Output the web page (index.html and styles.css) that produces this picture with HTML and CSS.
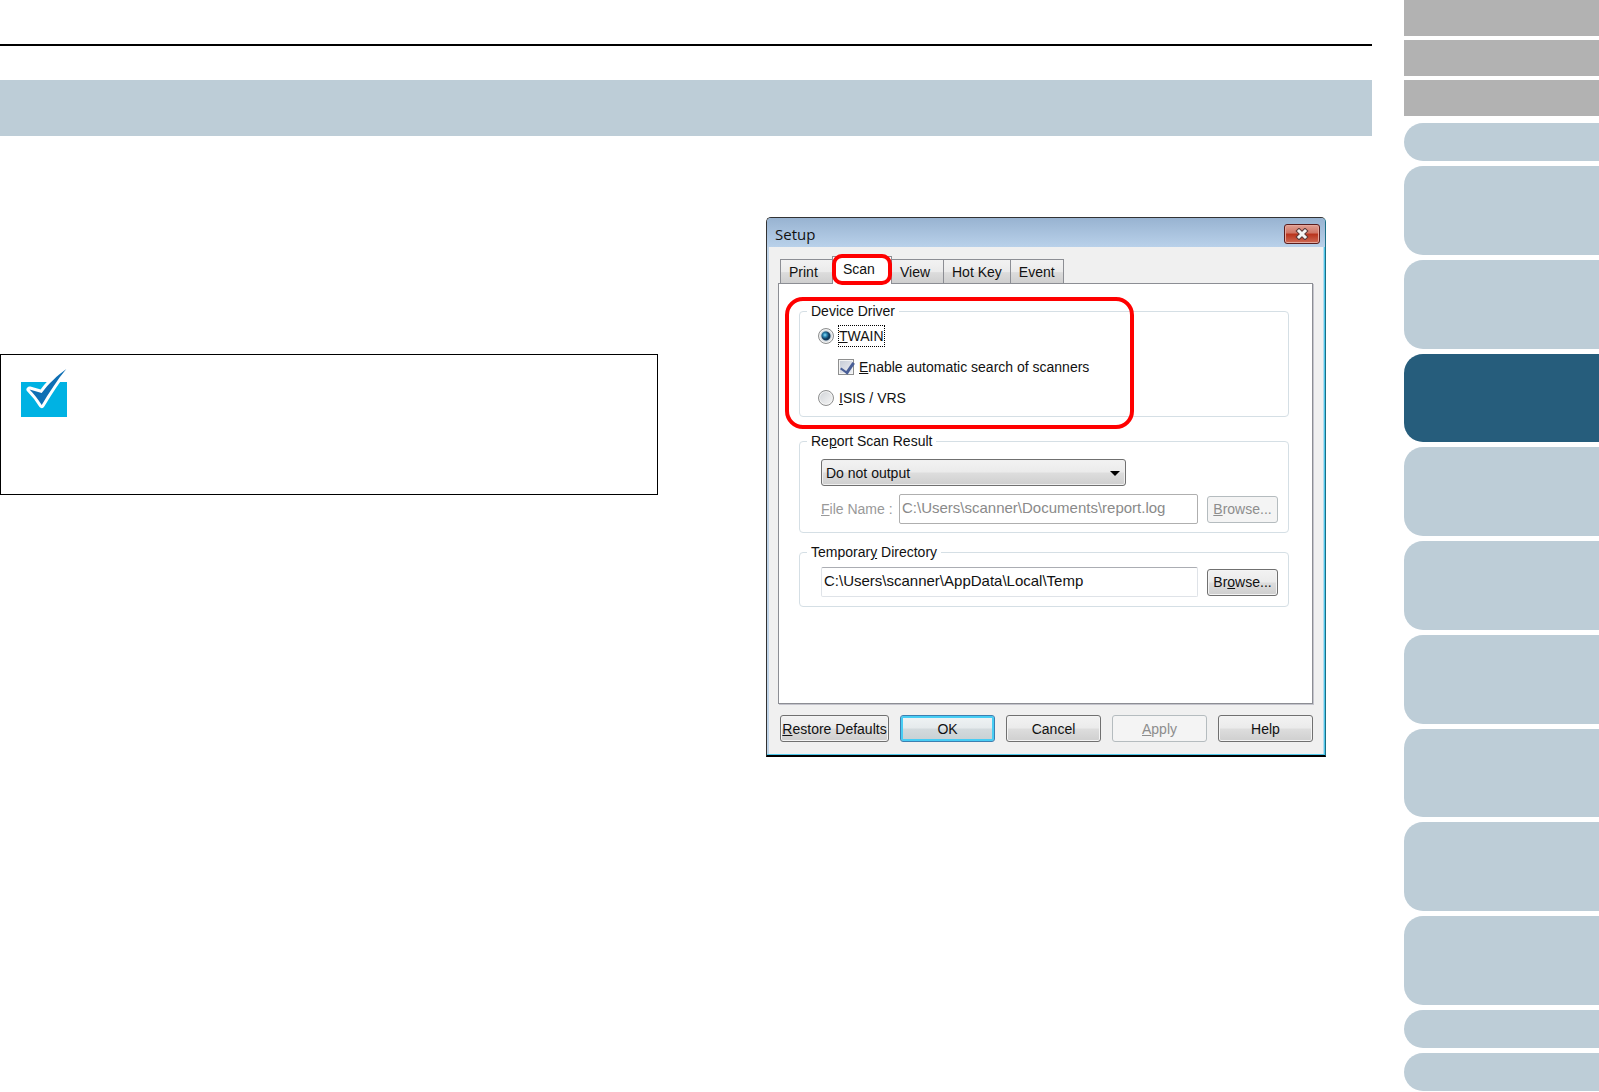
FILE: index.html
```html
<!DOCTYPE html>
<html lang="en">
  <head>
    <meta charset="UTF-8" />
    <title>Scan Setup</title>
    <link rel="stylesheet" href="styles.css">
  </head>
  <body>
    <div class="page">
      <main class="content">
        <div class="rule"></div>
        <div class="heading-bar"></div>

        <div class="columns">
          <div class="column">
            <div class="note">
              <svg class="note-icon" viewBox="0 0 46 51" width="46" height="51" aria-hidden="true">
                <rect x="0" y="16" width="46" height="35" fill="#00b2e3" />
                <path d="M8.5 23.5 L20.7 27 C27 18 37 9 45.3 3 C36 14 28 27 20.7 39 C17 33 13 28 8.5 23.5 Z" fill="#fff" stroke="#fff" stroke-width="6" stroke-linejoin="round" />
                <path d="M8.5 23.5 L20.7 27 C27 18 37 9 45.3 3 C36 14 28 27 20.7 39 C17 33 13 28 8.5 23.5 Z" fill="#0f6fb4" />
              </svg>
            </div>
          </div>

          <div class="column dialog-column">
            <form class="dialog">
              <header class="titlebar">
                <span>Setup</span>
                <button type="button" class="close" aria-label="Close">
                  <svg viewBox="0 0 14 12" width="14" height="12" aria-hidden="true">
                    <path d="M4 3 L10 9 M10 3 L4 9" stroke="#5b3a3a" stroke-width="5" stroke-linecap="square" />
                    <path d="M4 3 L10 9 M10 3 L4 9" stroke="#f4f4f4" stroke-width="3" stroke-linecap="square" />
                  </svg>
                </button>
              </header>

              <div class="dialog-body">
                <div class="tabs" role="tablist">
                  <button type="button" class="tab" role="tab">Print</button>
                  <button type="button" class="tab active" role="tab" aria-selected="true">Scan<span class="mark mark-tab"></span></button>
                  <button type="button" class="tab" role="tab">View</button>
                  <button type="button" class="tab" role="tab">Hot Key</button>
                  <button type="button" class="tab" role="tab">Event</button>
                </div>

                <div class="panel" role="tabpanel">
                  <span class="mark mark-driver"></span>

                  <fieldset class="group driver">
                    <legend>Device Driver</legend>
                    <div class="option">
                      <input type="radio" name="driver" id="twain" checked />
                      <label for="twain" class="focused"><u>T</u>WAIN</label>
                    </div>
                    <div class="option nested">
                      <input type="checkbox" id="autosearch" checked />
                      <label for="autosearch"><u>E</u>nable automatic search of scanners</label>
                    </div>
                    <div class="option">
                      <input type="radio" name="driver" id="isis" />
                      <label for="isis"><u>I</u>SIS / VRS</label>
                    </div>
                  </fieldset>

                  <fieldset class="group report">
                    <legend id="reportLabel">Re<u>p</u>ort Scan Result</legend>
                    <div class="select-wrap">
                      <select aria-labelledby="reportLabel">
                        <option>Do not output</option>
                      </select>
                    </div>
                    <div class="row">
                      <label for="fileName" class="disabled"><u>F</u>ile Name :</label>
                      <input type="text" id="fileName" value="C:\Users\scanner\Documents\report.log" disabled />
                      <button type="button" class="btn browse" disabled><u>B</u>rowse...</button>
                    </div>
                  </fieldset>

                  <fieldset class="group temp">
                    <legend id="tempLabel">Temporar<u>y</u> Directory</legend>
                    <div class="row">
                      <input type="text" aria-labelledby="tempLabel" value="C:\Users\scanner\AppData\Local\Temp" />
                      <button type="button" class="btn browse">Br<u>o</u>wse...</button>
                    </div>
                  </fieldset>
                </div>

                <footer class="buttons">
                  <button type="button" class="btn wide"><u>R</u>estore Defaults</button>
                  <button type="button" class="btn default">OK</button>
                  <button type="button" class="btn">Cancel</button>
                  <button type="button" class="btn" disabled><u>A</u>pply</button>
                  <button type="button" class="btn">Help</button>
                </footer>
              </div>
            </form>
          </div>
        </div>
      </main>

      <aside class="sidebar">
        <div class="links">
          <div class="link"></div>
          <div class="link"></div>
          <div class="link"></div>
        </div>
        <div class="chapters">
          <div class="chapter short"></div>
          <div class="chapter"></div>
          <div class="chapter"></div>
          <div class="chapter current"></div>
          <div class="chapter"></div>
          <div class="chapter"></div>
          <div class="chapter"></div>
          <div class="chapter"></div>
          <div class="chapter"></div>
          <div class="chapter"></div>
          <div class="chapter short"></div>
          <div class="chapter short"></div>
        </div>
      </aside>
    </div>
  </body>
</html>
```
FILE: styles.css
```css
* {
  box-sizing: border-box;
}
body {
  margin: 0;
  background: #fff;
  color: #111;
  font: 14px/20px "Liberation Sans", Arial, sans-serif;
}
.page {
  display: flex;
  gap: 32px;
  min-height: 100vh;
}
.content {
  flex: 1;
  padding-top: 44px;
}
.rule {
  height: 2px;
  background: #000;
}
.heading-bar {
  height: 56px;
  margin-top: 34px;
  background: #bdcdd7;
}
.columns {
  display: grid;
  grid-template-columns: 1fr 1fr;
  gap: 56px;
  padding-top: 81px;
}
.note {
  height: 141px;
  margin-top: 137px;
  padding: 11px 20px;
  border: 1px solid #000;
}
.note-icon {
  display: block;
}

/* right hand index */
.sidebar {
  display: flex;
  flex-direction: column;
  gap: 7px;
  width: 195px;
  padding-bottom: 1px;
}
.links {
  display: grid;
  gap: 4px;
}
.link {
  height: 36px;
  background: #b2b2b2;
}
.chapters {
  flex: 1;
  display: flex;
  flex-direction: column;
  gap: 5px;
}
.chapter {
  flex: 1;
  background: #bdcdd7;
  border-radius: 19px 0 0 19px;
}
.chapter.short {
  flex: 0 0 38px;
}
.chapter.current {
  background: #265d7c;
}

/* dialog window */
.dialog-column {
  padding-left: 52px;
}
.dialog {
  max-width: 560px;
  border: 1px solid #333;
  border-right-color: #1c6f86;
  border-bottom: 2px solid #000;
  border-radius: 5px 5px 0 0;
  background: #f0f0f0;
  box-shadow: inset -1px -1px #4fc8ea, inset 2px 0 #c0d4e8, inset -2px 0 #b5dcee;
}
.titlebar {
  display: flex;
  justify-content: space-between;
  align-items: center;
  height: 29px;
  padding: 2px 5px 0 8px;
  border-radius: 4px 4px 0 0;
  background: linear-gradient(#98b3d1, #b9d1ea);
  font-family: "Open Sans", sans-serif;
  font-size: 15px;
}
.close {
  display: flex;
  justify-content: center;
  align-items: center;
  width: 36px;
  height: 20px;
  padding: 0;
  border: 1px solid #5a1d1d;
  border-radius: 3px;
  background: linear-gradient(#e0a093, #cf7363 45%, #b8321b 50%, #cf6a55);
  box-shadow: inset 0 0 0 1px #e5a79c;
}
.dialog-body {
  padding: 9px 12px 13px 11px;
}
.tabs {
  display: flex;
  align-items: flex-end;
  padding-left: 2px;
}
.tab {
  min-width: 53px;
  height: 24px;
  margin-right: -1px;
  padding: 0 8px;
  border: 1px solid #8c8e94;
  border-bottom: 0;
  background: linear-gradient(#f2f2f2, #ebebeb 50%, #dcdcdc 55%, #cfcfcf);
  color: #111;
  font: inherit;
  text-align: left;
}
.tab.active {
  position: relative;
  z-index: 1;
  min-width: 60px;
  height: 28px;
  margin-bottom: -1px;
  padding: 0 10px 4px;
  background: #fff;
}
.panel {
  position: relative;
  height: 421px;
  padding: 17px 23px 0 20px;
  border: 1px solid #8c8e94;
  background: #fff;
  box-shadow: 1px 1px #c4c4cc;
}
.group {
  min-width: 0;
  margin: 0 0 14px;
  padding: 0 10px 0 21px;
  border: 1px solid #d5dfe5;
  border-radius: 4px;
}
.group legend {
  margin-left: -14px;
  padding: 0 4px;
}
.driver {
  height: 116px;
}
.report {
  height: 102px;
  margin-bottom: 9px;
}
.temp {
  height: 65px;
}
.option {
  display: flex;
  align-items: center;
  gap: 5px;
  height: 20px;
  margin: 5px 0 0 -3px;
}
.option + .option {
  margin-top: 11px;
}
.option.nested {
  margin-left: 17px;
}
.option input {
  appearance: none;
  flex: none;
  width: 16px;
  height: 16px;
  margin: 0;
  border: 1px solid #8e8f8f;
  background: linear-gradient(135deg, #d0d3d7, #f6f6f6);
  box-shadow: inset 0 0 0 1px #f4f4f4;
}
.option input[type="radio"] {
  border-radius: 50%;
}
.option input[type="radio"]:checked {
  background: radial-gradient(circle at 6px 6px, #8fe0f8 0, #2a86b4 2px, transparent 4px),
    radial-gradient(circle, #123a5c 4px, #d5dbe0 5px, #eee);
}
.option input[type="checkbox"] {
  background: linear-gradient(135deg, #c4c9d4, #f0f2f6);
}
.option input[type="checkbox"]:checked::before {
  content: "";
  display: block;
  width: 6px;
  height: 11px;
  margin: 0 0 0 4px;
  border: solid #4a5f97;
  border-width: 0 3px 2px 0;
  transform: rotate(35deg);
}
.focused {
  outline: 1px dotted #000;
}
.select-wrap {
  position: relative;
  width: 305px;
  margin-top: 8px;
}
.select-wrap::after {
  content: "";
  position: absolute;
  top: 12px;
  right: 6px;
  border: 5px solid transparent;
  border-top-color: #000;
  border-bottom: 0;
  pointer-events: none;
}
select {
  appearance: none;
  display: block;
  width: 100%;
  height: 27px;
  padding: 0 4px;
  border: 1px solid #707070;
  border-radius: 3px;
  background: linear-gradient(#f2f2f2, #ebebeb 48%, #dddddd 52%, #cfcfcf);
  box-shadow: inset 0 0 0 1px #f0f0f0;
  color: #111;
  font: inherit;
}
.row {
  display: flex;
  align-items: center;
  gap: 9px;
  margin-top: 8px;
}
.row .disabled {
  flex: none;
  width: 69px;
  color: #999;
  white-space: nowrap;
}
.row input {
  flex: 1;
  min-width: 0;
  height: 30px;
  padding: 0 2px 4px;
  border: 1px solid #dfe3e8;
  border-top-color: #abadb3;
  border-radius: 2px;
  background: #fff;
  color: #111;
  font: inherit;
  font-size: 15px;
}
.row input:disabled {
  border-color: #afafaf;
  color: #8a8a8a;
}
.temp .row {
  margin-top: 5px;
}
.btn {
  flex: 1;
  height: 27px;
  padding: 0;
  border: 1px solid #707070;
  border-radius: 3px;
  background: linear-gradient(#f2f2f2, #ebebeb 48%, #dddddd 52%, #cfcfcf);
  box-shadow: inset 0 0 0 1px #f4f4f4;
  color: #111;
  font: inherit;
  white-space: nowrap;
}
.btn:disabled {
  border-color: #b5bcbf;
  background: #f4f4f4;
  color: #8d8d8d;
}
.btn.browse {
  flex: none;
  width: 71px;
}
.btn.wide {
  flex: 0 0 109px;
}
.btn.default {
  border-color: #3c7fb1;
  background: linear-gradient(#f0f4f5, #e5eaec 48%, #d3dadd 52%, #c8d0d3);
  box-shadow: inset 0 0 0 2px #48cdf4;
}
.buttons {
  display: flex;
  gap: 11px;
  padding: 11px 0 0 2px;
}

/* red call-outs */
.mark {
  position: absolute;
  z-index: 2;
  border: 4px solid #f00;
  pointer-events: none;
}
.mark-tab {
  top: -3px;
  left: -1px;
  width: 60px;
  height: 31px;
  border-radius: 10px;
}
.mark-driver {
  top: 13px;
  left: 6px;
  width: 349px;
  height: 132px;
  border-radius: 18px;
}
```
